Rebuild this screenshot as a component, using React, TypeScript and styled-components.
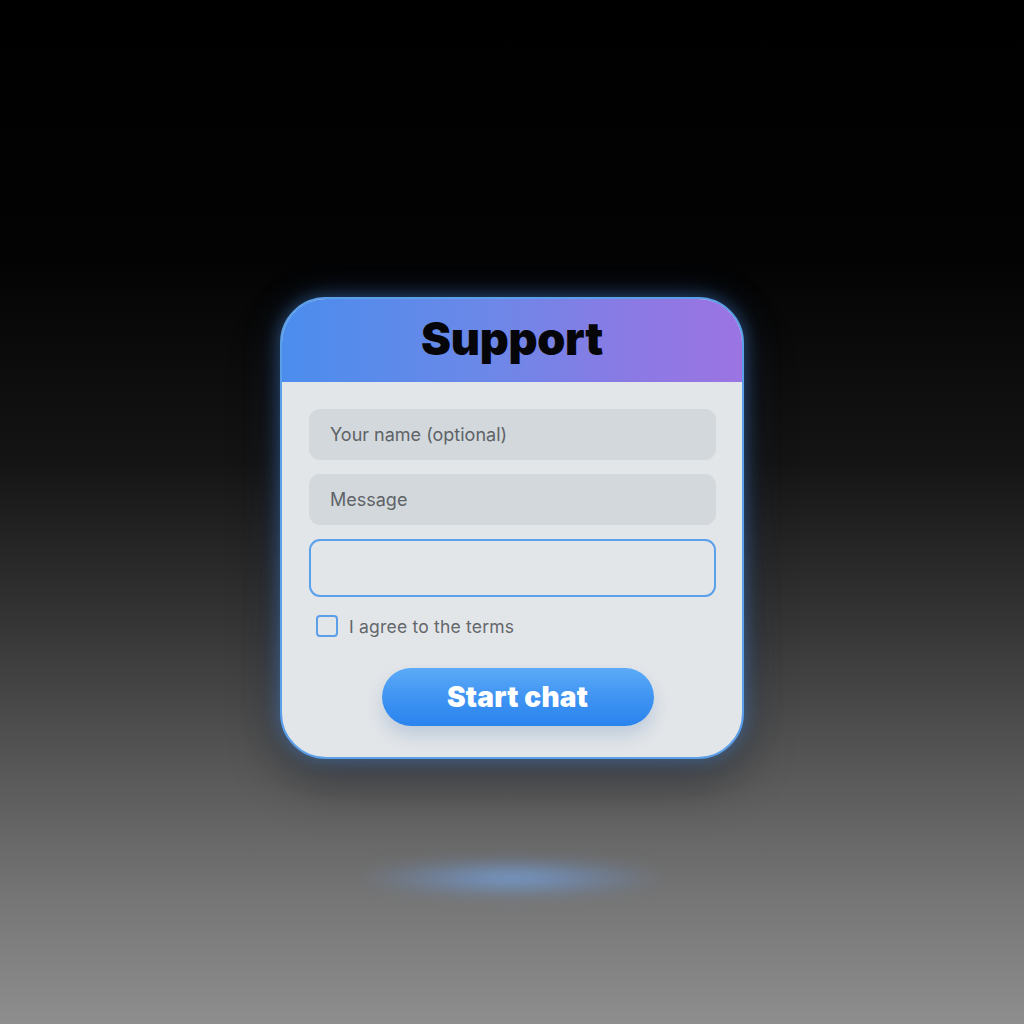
import styled, { createGlobalStyle } from "styled-components";

const GlobalStyle = createGlobalStyle`
  html, body {
    margin: 0;
    padding: 0;
  }
  body {
    font-family: Inter, "Liberation Sans", sans-serif;
    background: #000;
  }
`;

const Stage = styled.div`
  min-height: 1024px;
  display: flex;
  flex-direction: column;
  align-items: center;
  background: linear-gradient(
    180deg,
    #000 0%,
    #030303 25%,
    #141414 45%,
    #333 60%,
    #575757 75%,
    #767676 88%,
    #8e8e8e 100%
  );
  overflow: hidden;
`;

const Card = styled.div`
  margin-top: 297px;
  width: 464px;
  box-sizing: border-box;
  border: 2px solid #5b9fe9;
  border-radius: 46px;
  background: #e3e6e9;
  overflow: hidden;
  box-shadow: 0 0 18px rgba(80, 150, 240, 0.45), 0 0 40px rgba(60, 130, 230, 0.18),
    0 24px 50px rgba(0, 0, 0, 0.35);
`;

const Header = styled.div`
  height: 83px;
  display: flex;
  align-items: center;
  justify-content: center;
  background: linear-gradient(90deg, #4b8ded 0%, #6c88e8 45%, #8a7ae4 75%, #9b74e2 100%);
`;

const Title = styled.h1`
  margin: 0;
  padding-bottom: 4px;
  font-size: 45px;
  font-weight: 900;
  letter-spacing: -0.3px;
  color: #06060a;
`;

const Body = styled.div`
  padding: 27px 26px 31px 27px;
  display: flex;
  flex-direction: column;
`;

const Field = styled.div<{ $outlined?: boolean }>`
  box-sizing: border-box;
  height: ${(p) => (p.$outlined ? "58px" : "51px")};
  margin-bottom: ${(p) => (p.$outlined ? "18px" : "14px")};
  border-radius: 11px;
  padding: 0 21px;
  display: flex;
  align-items: center;
  font-size: 18px;
  color: #5e6367;
  background: ${(p) => (p.$outlined ? "#e3e6e9" : "#d3d8dc")};
  border: ${(p) => (p.$outlined ? "2px solid #5ba0ea" : "none")};
`;

const CheckRow = styled.label`
  display: flex;
  align-items: center;
  gap: 11px;
  padding-left: 7px;
  font-size: 17.5px;
  letter-spacing: 0.2px;
  color: #63676b;
`;

const Box = styled.span`
  box-sizing: border-box;
  width: 22px;
  height: 22px;
  border: 2px solid #5b9fe9;
  border-radius: 4px;
`;

const Button = styled.button`
  align-self: center;
  margin-top: 31px;
  margin-left: 10px;
  width: 272px;
  height: 58px;
  border: none;
  border-radius: 29px;
  background: linear-gradient(180deg, #5cabf8 0%, #3d92f2 55%, #2a84ee 100%);
  color: #fff;
  font-family: Inter, "Liberation Sans", sans-serif;
  font-size: 28px;
  font-weight: 900;
  letter-spacing: 0.2px;
  box-shadow: 0 10px 18px rgba(60, 110, 170, 0.22);
`;

const Glow = styled.div`
  margin-top: 101px;
  width: 300px;
  height: 36px;
  border-radius: 50%;
  background: radial-gradient(
    ellipse at center,
    rgba(120, 170, 235, 0.85) 0%,
    rgba(110, 150, 210, 0.45) 40%,
    rgba(110, 140, 180, 0) 75%
  );
  filter: blur(8px);
`;

export default function App() {
  return (
    <Stage>
      <GlobalStyle />
      <Card>
        <Header>
          <Title>Support</Title>
        </Header>
        <Body>
          <Field>Your name (optional)</Field>
          <Field>Message</Field>
          <Field $outlined />
          <CheckRow>
            <Box />
            I agree to the terms
          </CheckRow>
          <Button>Start chat</Button>
        </Body>
      </Card>
      <Glow />
    </Stage>
  );
}
